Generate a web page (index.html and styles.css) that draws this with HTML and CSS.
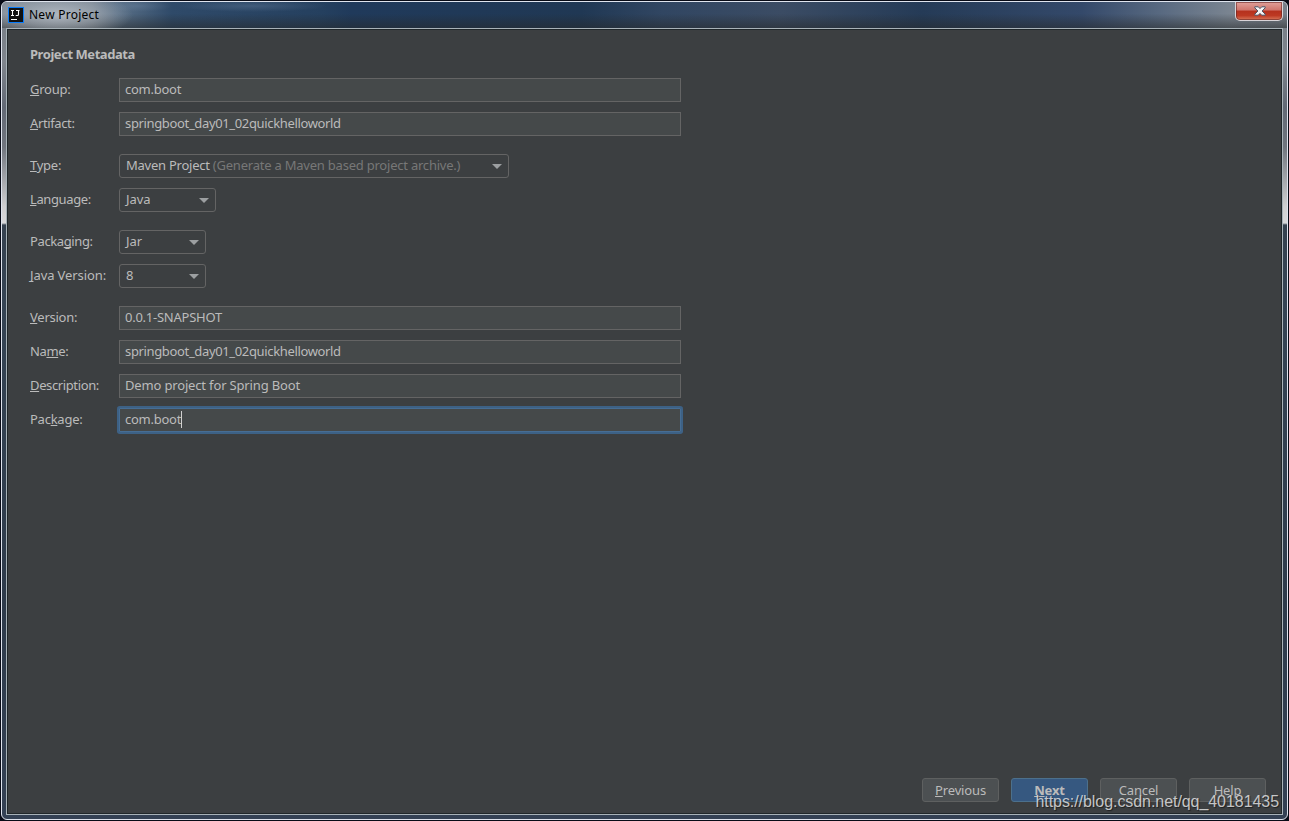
FILE: index.html
```html
<!DOCTYPE html>
<html>
    <head>
        <meta charset="utf-8">
        <link rel="stylesheet" href="styles.css">
        <title>New Project</title>
    </head>
    <body>
        <div class="window">
            <div class="title-bar">
                <svg class="app-icon" width="16" height="16" viewBox="0 0 16 16">
                    <rect width="16" height="16" fill="#087cfa"/>
                    <rect x="1" y="1" width="14" height="14" fill="#111"/>
                    <path d="M3 3.5h3M4.5 3.5v5M3 8.5h3M8 3.5h3.5M10.5 3.5v4q0 1-1 1H7.7M3 12.5h6" fill="none" stroke="#fff" stroke-width="1.1"/>
                </svg>
                <span class="window-title">New Project</span>
                <button class="close-button">
                    <svg width="12" height="10" viewBox="0 0 12 10">
                        <path d="M.8.8h3.5L6 2.6 7.7.8h3.5v1L8.1 5l3.1 3.2v1H7.7L6 7.4 4.3 9.2H.8v-1L3.9 5 .8 1.8z" fill="#f5f5f5" stroke="#4a5264" stroke-width="1"/>
                    </svg>
                </button>
            </div>
            <div class="content">
                <h1 class="heading">Project Metadata</h1>
                <div class="form">
                    <div class="row">
                        <label class="label"><u>G</u>roup:</label>
                        <div class="field"><span>com.boot</span></div>
                    </div>
                    <div class="row">
                        <label class="label label-tight"><u>A</u>rtifact:</label>
                        <div class="field"><span class="text-artifact">springboot_day01_02quickhelloworld</span></div>
                    </div>
                    <div class="row section">
                        <label class="label"><u>T</u>ype:</label>
                        <div class="select select-type">
                            <span>Maven Project <span class="hint">(Generate a Maven based project archive.)</span></span>
                            <span class="arrow"></span>
                        </div>
                    </div>
                    <div class="row">
                        <label class="label label-tight"><u>L</u>anguage:</label>
                        <div class="select select-language"><span class="text-short">Java</span><span class="arrow"></span></div>
                    </div>
                    <div class="row section">
                        <label class="label label-tight">Packa<u>g</u>ing:</label>
                        <div class="select select-small"><span class="text-short">Jar</span><span class="arrow"></span></div>
                    </div>
                    <div class="row">
                        <label class="label label-wide"><u>J</u>ava Version:</label>
                        <div class="select select-small"><span>8</span><span class="arrow"></span></div>
                    </div>
                    <div class="row section">
                        <label class="label"><u>V</u>ersion:</label>
                        <div class="field"><span>0.0.1-SNAPSHOT</span></div>
                    </div>
                    <div class="row">
                        <label class="label label-tight">Na<u>m</u>e:</label>
                        <div class="field"><span class="text-artifact">springboot_day01_02quickhelloworld</span></div>
                    </div>
                    <div class="row">
                        <label class="label label-tight"><u>D</u>escription:</label>
                        <div class="field"><span class="text-description">Demo project for Spring Boot</span></div>
                    </div>
                    <div class="row">
                        <label class="label">Pac<u>k</u>age:</label>
                        <div class="field focused"><span>com.boot</span><span class="caret"></span></div>
                    </div>
                </div>
                <div class="buttons">
                    <button class="button"><u>P</u>revious</button>
                    <button class="button primary"><u>N</u>ext</button>
                    <button class="button">Cancel</button>
                    <button class="button">Help</button>
                </div>
            </div>
        </div>
        <div class="watermark">https://blog.csdn.net/qq_40181435</div>
    </body>
</html>
```

FILE: styles.css
```css
* {
    box-sizing: border-box;
}

body {
    margin: 0;
    padding: 1px;
    height: 821px;
    overflow: hidden;
    background-color: #080b16;
    font-family: "Noto Sans", "Open Sans", sans-serif;
    font-size: 13px;
    color: #bbbbbb;
}

.window {
    width: 1287px;
    height: 819px;
    padding: 0 4px;
    border: 1px solid #dfe4ee;
    border-radius: 6px;
    background: linear-gradient(#747b84 0, #7f858d 60px, #626975 105px, #70757e 145px, #cfcfd1 205px, #d8d8da 221px, #35414f 223px, #354454 300px, #2e3b4b 600px, #344154 100%);
}

.title-bar {
    display: flex;
    align-items: flex-start;
    height: 26px;
    margin: 0 -4px;
    padding: 5px 4px 0 6px;
    border-radius: 5px 5px 0 0;
    background:
        radial-gradient(ellipse 75px 24px at 56px 13px, rgba(190, 196, 204, .8), rgba(175, 182, 190, .5) 50%, transparent),
        radial-gradient(ellipse 35px 6px at 135px 4px, rgba(120, 145, 175, .3), transparent),
        radial-gradient(ellipse 75px 6px at 250px 4px, rgba(120, 145, 175, .3), transparent),
        linear-gradient(transparent 45%, rgba(38, 40, 40, .55)),
        linear-gradient(90deg, #7c8794 0, #758290 90px, #5a7087 115px, #2f4a69 170px, #25405f 320px, #203a5b 350px, #203854 580px, #314662 660px, #3b4c64 780px, #253b57 920px, #34496a 1080px, #596a81 1160px, #7b8591 1230px, #777f89 100%);
}

.window-title {
    margin-left: 5px;
    font-size: 12px;
    line-height: 16px;
    color: #000;
    letter-spacing: 0.25px;
}

.close-button {
    display: flex;
    align-items: center;
    justify-content: center;
    width: 48px;
    height: 19px;
    margin-top: -5px;
    margin-left: auto;
    padding: 0 0 1px 1px;
    border: 1px solid #d9d4d8;
    border-top: none;
    border-radius: 0 0 5px 5px;
    background: linear-gradient(#e1a19b, #cf756c 45%, #b5311e 50%, #bd3923 75%, #d8795c);
    box-shadow: inset 0 0 0 1px #64252399;
}

.content {
    display: flex;
    flex-direction: column;
    width: 1277px;
    height: 787px;
    padding: 17px 16px 12px 22px;
    border: 1px solid #a8b2b8;
    outline: 1px solid #20272a;
    outline-offset: -2px;
    background-color: #3c3f41;
}

.heading {
    margin: 0 0 15px 1px;
    font-size: 13px;
    line-height: 17px;
    letter-spacing: -0.45px;
}

.form {
    display: flex;
    flex-direction: column;
    gap: 10px;
    margin-left: 1px;
    letter-spacing: -0.25px;
}

.row {
    display: flex;
    align-items: center;
    height: 24px;
}

.section {
    margin-top: 8px;
}

.label {
    width: 89px;
    padding-bottom: 2px;
    white-space: nowrap;
}

.label-tight {
    letter-spacing: -0.38px;
}

.label-wide {
    letter-spacing: -0.1px;
}

u {
    text-decoration: underline;
    text-decoration-thickness: 1px;
    text-underline-offset: 1px;
    text-decoration-skip-ink: none;
}

.field {
    display: flex;
    align-items: center;
    width: 562px;
    height: 24px;
    padding: 0 5px 2px;
    border: 1px solid #646464;
    background-color: #45494a;
    white-space: nowrap;
}

.text-artifact {
    letter-spacing: -0.35px;
}

.text-description {
    letter-spacing: -0.16px;
}

.text-short {
    letter-spacing: -0.1px;
}

.focused {
    border-color: #466d94;
    box-shadow: 0 0 0 2px #3d6185;
    border-radius: 1px;
}

.caret {
    width: 1px;
    height: 17px;
    background-color: #d0d0d0;
}

.select {
    display: flex;
    align-items: center;
    justify-content: space-between;
    height: 24px;
    padding: 0 6px 2px;
    border: 1px solid #646464;
    border-radius: 3px;
    white-space: nowrap;
}

.select-type {
    width: 390px;
}

.select-language {
    width: 97px;
}

.select-small {
    width: 87px;
}

.hint {
    color: #777777;
    letter-spacing: -0.22px;
}

.arrow {
    margin-top: 2px;
    border-left: 5px solid transparent;
    border-right: 5px solid transparent;
    border-top: 5px solid #9c9fa1;
}

.buttons {
    display: flex;
    justify-content: flex-end;
    gap: 12px;
    margin-top: auto;
}

.button {
    width: 77px;
    height: 24px;
    padding: 0;
    border: 1px solid #5e6060;
    border-radius: 3px;
    background-color: #4c5052;
    color: #bbbbbb;
    font-family: inherit;
    font-size: 13px;
    letter-spacing: -0.15px;
}

.primary {
    border-color: #4c708c;
    background-color: #365880;
    font-weight: bold;
}

/* sits over the bottom buttons */
.watermark {
    position: absolute;
    right: 10px;
    bottom: 10px;
    font-family: "Liberation Sans", Arial, sans-serif;
    font-size: 16px;
    line-height: 18px;
    letter-spacing: -0.06px;
    color: rgba(225, 225, 225, .85);
    text-shadow: 1px 1px 1px rgba(0, 0, 0, .5);
}
```
